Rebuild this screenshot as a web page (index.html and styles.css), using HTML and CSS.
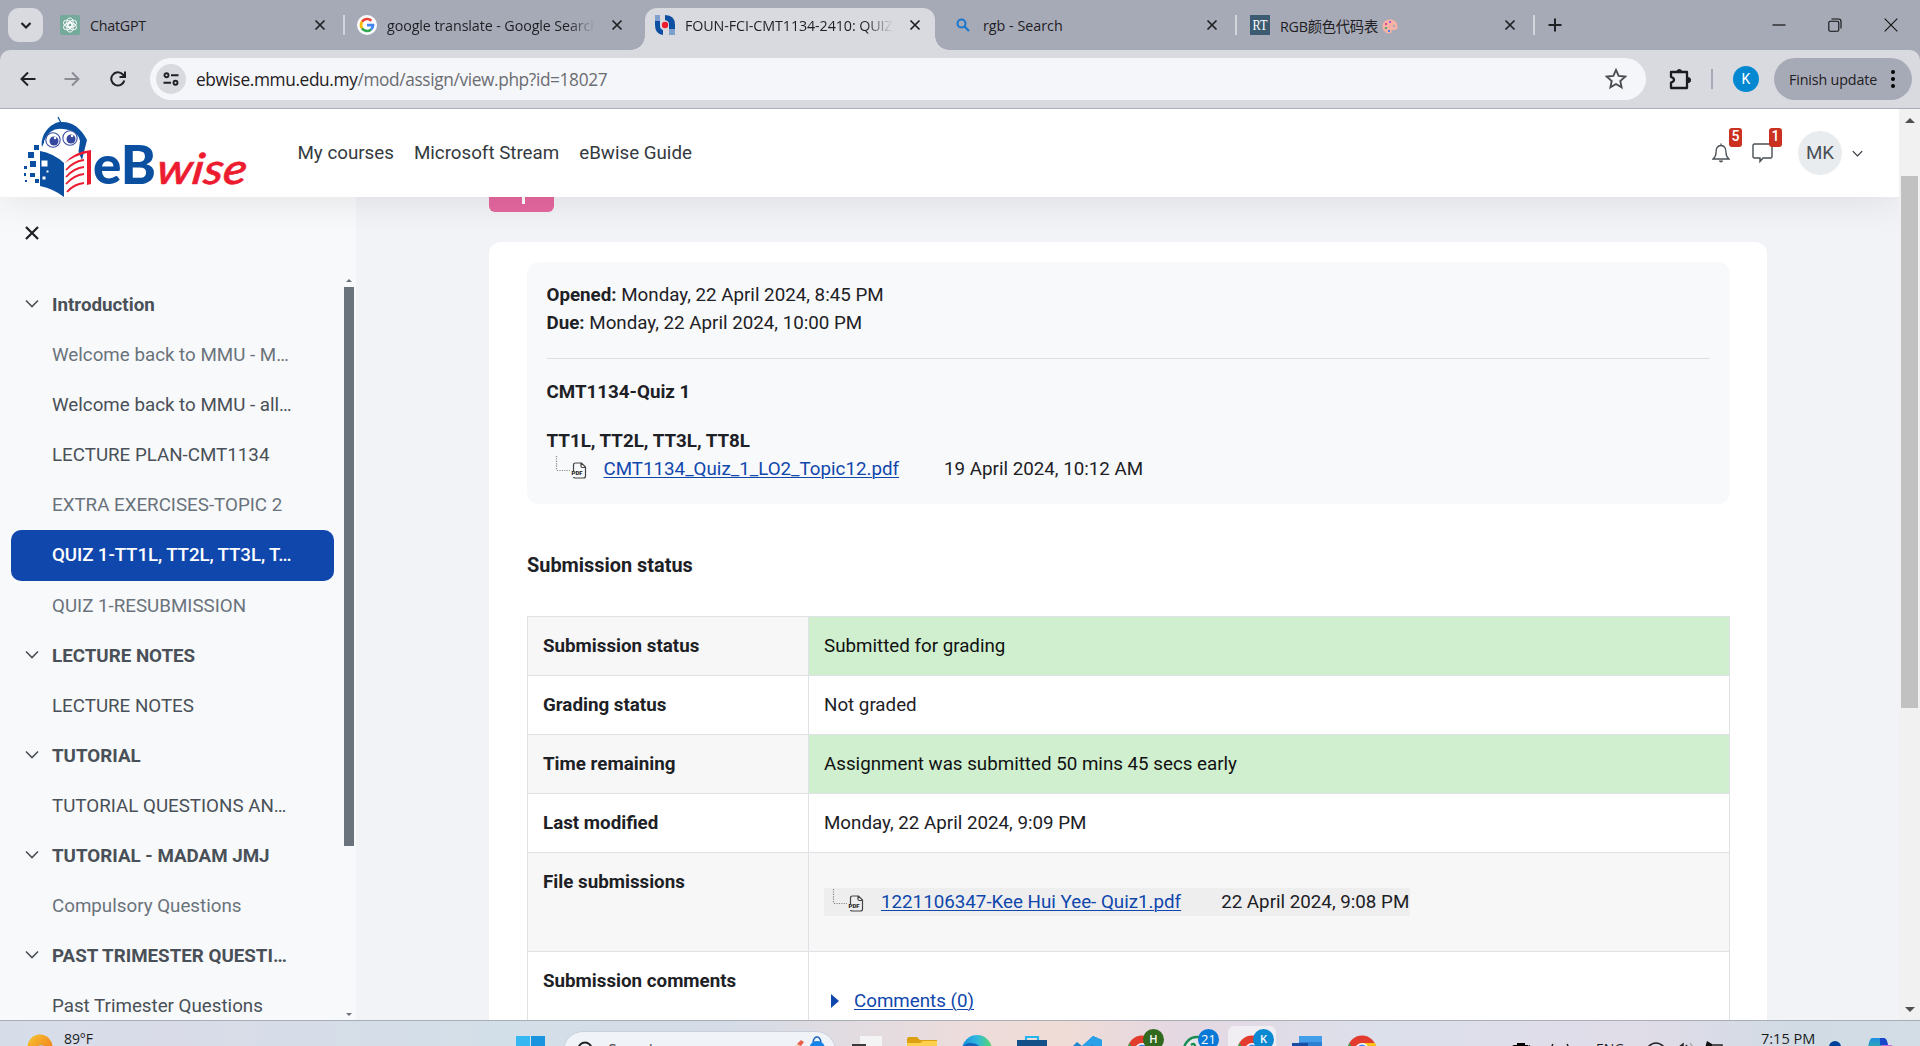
FILE: index.html
```html
<!DOCTYPE html>
<html lang="en">
<head>
<meta charset="utf-8">
<title>FOUN-FCI-CMT1134-2410: QUIZ 1</title>
<link rel="stylesheet" href="styles.css">
</head>
<body>
<svg width="0" height="0" class="defs">
  <symbol id="x" viewBox="0 0 12 12"><path d="M1.5 1.5l9 9M10.5 1.5l-9 9" fill="none" stroke="currentColor" stroke-width="1.7"/></symbol>
  <symbol id="chev" viewBox="0 0 14 8"><path d="M1 1l6 6 6-6" fill="none" stroke="currentColor" stroke-width="1.6"/></symbol>
  <symbol id="pdf" viewBox="0 0 32 26">
    <path d="M1.5 0v14.5M2 14.5h13" fill="none" stroke="#8a8a8a" stroke-width="1.2" stroke-dasharray="1.2 1.2"/>
    <path d="M18.500 15V9q0-2 2-2h6l4 4v9q0 2-2 2h-8q-2 0-2-1M26 7v3q0 1.500 1.500 1.500h3" fill="none" stroke="#444" stroke-width="1.200"/>
    <text x="16.500" y="19" font-size="6" font-weight="900" fill="#222" font-family="Roboto">PDF</text>
  </symbol>
  <symbol id="chrome" viewBox="0 0 30 30">
    <circle cx="15" cy="15" r="14.500" fill="#e33b2e"/><path d="M15 8h13a14.500 14.500 0 0 1-13 21.500l6-11z" fill="#fbc116"/><path d="M2.500 8l6.500 10 6 3.500-3 8A14.500 14.500 0 0 1 2.500 8z" fill="#2da94f"/>
    <circle cx="15" cy="15" r="7" fill="#fff"/><circle cx="15" cy="15" r="5.500" fill="#4285f4"/>
  </symbol>
</svg>

<div class="tabstrip">
  <div class="tab-search"><svg width="12" height="9" viewBox="0 0 12 9"><path d="M1.500 2L6 6.500 10.500 2" fill="none" stroke="#1f2023" stroke-width="2.200"/></svg></div>
  <div class="tab t1">
    <svg class="fav" viewBox="0 0 20 20"><rect width="20" height="20" rx="2" fill="#74aa9c"/><g fill="none" stroke="#fff" stroke-width="1"><ellipse cx="10" cy="7.500" rx="3.200" ry="4.500"/><ellipse cx="10" cy="7.500" rx="3.200" ry="4.500" transform="rotate(60 10 10)"/><ellipse cx="10" cy="7.500" rx="3.200" ry="4.500" transform="rotate(120 10 10)"/><ellipse cx="10" cy="7.500" rx="3.200" ry="4.500" transform="rotate(180 10 10)"/><ellipse cx="10" cy="7.500" rx="3.200" ry="4.500" transform="rotate(240 10 10)"/><ellipse cx="10" cy="7.500" rx="3.200" ry="4.500" transform="rotate(300 10 10)"/></g></svg>
    <span class="tt">ChatGPT</span><svg class="cls"><use href="#x"/></svg>
  </div>
  <i class="sep"></i>
  <div class="tab t2">
    <svg class="fav" viewBox="0 0 20 20"><circle cx="10" cy="10" r="10" fill="#fff"/><g fill="none" stroke-width="2.700"><path d="M5 6.700A6 6 0 0 1 14.300 5.800" stroke="#ea4335"/><path d="M5 13.300a6 6 0 0 1 0-6.600" stroke="#fbbc05"/><path d="M14 14.500a6 6 0 0 1-9-1.200" stroke="#34a853"/><path d="M10 10.200h6q0 2.800-2 4.300" stroke="#4285f4"/></g></svg>
    <span class="tt fade">google translate - Google Search</span><svg class="cls"><use href="#x"/></svg>
  </div>
  <div class="tab t3">
    <svg class="fav" viewBox="0 0 20 20"><path d="M0 0h5v6H0zM14 14h6v6h-6z" fill="#7fa0cd"/><path d="M0 6h5v5q0 3 3 4v5Q0 19 0 10zM10 0q10 0 10 10v4h-6V9q0-3-4-4z" fill="#0b4ea2"/><circle cx="10" cy="10" r="3.200" fill="#ee1c2e"/></svg>
    <span class="tt fade">FOUN-FCI-CMT1134-2410: QUIZ 1</span><svg class="cls"><use href="#x"/></svg>
  </div>
  <div class="tab t4">
    <svg class="fav" viewBox="0 0 20 20"><circle cx="8.500" cy="8.500" r="4" fill="none" stroke="#1777cf" stroke-width="2"/><path d="M11.500 11.500l4.500 4.500" stroke="#1777cf" stroke-width="2.200"/></svg>
    <span class="tt wide">rgb - Search</span><svg class="cls"><use href="#x"/></svg>
  </div>
  <i class="sep"></i>
  <div class="tab t5">
    <svg class="fav" viewBox="0 0 20 20"><rect width="20" height="20" fill="#3c5a70"/><text x="2.500" y="14.500" font-size="14" fill="#fff" font-family="Liberation Serif" textLength="15" lengthAdjust="spacingAndGlyphs">RT</text></svg>
    <span class="tt">RGB颜色代码表<svg class="palette" width="16" height="15" viewBox="0 0 16 15"><path d="M8 .5C3 .5.500 4 .500 7.500S3 14.500 8 14.500c2 0 1-3 2.500-3.500s5 1 5-3.500S12 .500 8 .500z" fill="#f9b3a6"/><circle cx="4" cy="5" r="1.100" fill="#e0308b"/><circle cx="8" cy="3" r="1.100" fill="#8a4ad8"/><circle cx="4" cy="9" r="1.100" fill="#25a55f"/><circle cx="7" cy="12" r="1.100" fill="#3568ef"/><circle cx="12" cy="7" r="1.200" fill="#a9adba"/></svg></span><svg class="cls"><use href="#x"/></svg>
  </div>
  <i class="sep"></i>
  <svg class="plus" viewBox="0 0 14 14"><path d="M7 .5v13M.5 7h13" stroke="#1f2023" stroke-width="2"/></svg>
  <div class="winbtns">
    <svg width="14" height="14" viewBox="0 0 14 14"><path d="M.5 7h13" stroke="#111" stroke-width="1.200"/></svg>
    <svg width="14" height="14" viewBox="0 0 14 14"><g fill="none" stroke="#111" stroke-width="1.100"><rect x=".8" y="3.200" width="10" height="10" rx="1.500"/><path d="M3.500 1h7Q13 1 13 3.500v7"/></g></svg>
    <svg width="14" height="14" viewBox="0 0 14 14"><path d="M.7.700l12.600 12.600M13.300.700L.700 13.300" stroke="#111" stroke-width="1.100"/></svg>
  </div>
</div>

<div class="toolbar">
  <svg class="nav-ic" viewBox="0 0 16 16"><path d="M15.500 8H2M8 1.500L1.500 8 8 14.500" fill="none" stroke="#1f2023" stroke-width="2"/></svg>
  <svg class="nav-ic fwd" viewBox="0 0 16 16"><path d="M.5 8H14M8 1.500L14.500 8 8 14.500" fill="none" stroke="#8a8c93" stroke-width="2"/></svg>
  <svg class="nav-ic rel" viewBox="0 0 16 16"><path d="M14.300 9.500A6.600 6.600 0 1 1 12.800 3.500L14.500 5.500M15 .5v5.600H9.500" fill="none" stroke="#1f2023" stroke-width="2"/></svg>
  <div class="omni">
    <div class="site"><svg width="16" height="14" viewBox="0 0 16 14"><g fill="none" stroke="#1f2023" stroke-width="1.900"><circle cx="3.500" cy="3.200" r="2"/><path d="M8 3.200h7.500M.5 10.800H8"/><circle cx="12.500" cy="10.800" r="2"/></g></svg></div>
    <span class="url">ebwise.mmu.edu.my<span>/mod/assign/view.php?id=18027</span></span>
    <svg class="star" viewBox="0 0 20 20"><path d="M10 1.800l2.400 5.400 5.900.600-4.400 4 1.200 5.800-5.100-3-5.100 3 1.200-5.800-4.400-4 5.900-.6z" fill="none" stroke="#4a4c52" stroke-width="1.700"/></svg>
  </div>
  <svg class="puz" viewBox="0 0 22 22"><path d="M2 4h6.500M12.500 4H18v16H2v-5.500q3-1 3-2.800T2 8.800V4z" fill="none" stroke="#1b1c20" stroke-width="2.300" stroke-linejoin="round"/><path d="M7.500 4a2.800 3 0 0 1 5.500 0zM19 9.500a2.600 2.600 0 0 1 0 5.200z" fill="#1b1c20" stroke="#1b1c20"/></svg>
  <i class="tsep"></i>
  <div class="avatar">K</div>
  <div class="finish"><span>Finish update</span><svg width="4" height="18" viewBox="0 0 4 18"><circle cx="2" cy="2" r="2"/><circle cx="2" cy="9" r="2"/><circle cx="2" cy="16" r="2"/></svg></div>
</div>

<div class="viewport">
  <div class="site-page">
    <header class="top">
      <svg class="logo" viewBox="0 -1 230 84" width="230" height="84">
        <path d="M38 2l4 8" stroke="#0b4ea2" stroke-width="1.200"/>
        <path d="M22 32C20 20 30 8 40 7c12-1 21 6 27 18l-5 20-4-9C58 24 55 17 44 15q-7-3-9 3-9 3-13 14z" fill="#0a4fa0"/>
        <path d="M24 26Q30 12 43 14 58 15 60 26l-2 14-14 2-20-7z" fill="#fff"/>
        <g fill="#fff" stroke="#3b4fa0" stroke-width="1.100"><circle cx="33" cy="25" r="7.200"/><circle cx="50" cy="23" r="7.200"/></g>
        <circle cx="34" cy="26" r="4.500" fill="#36479e"/><circle cx="51" cy="24" r="4.500" fill="#36479e"/><circle cx="35" cy="23" r="1.200" fill="#fff"/><circle cx="52" cy="21" r="1.200" fill="#fff"/>
        <path d="M20 36q13 2 24 12v34q-10-8-24-11z" fill="#0a4fa0"/>
        <path d="M14 30h5v5h-5zM8 37h6v6H8zM10 46h6v6h-6zM4 51h3v3H4zM10 58h5v4h-5zM5 65h2v2H5zM4 58h2v3H4zM15 64h4v4h-4z" fill="#0a4fa0"/>
        <path d="M21 45h7v7h-7zM26 55h3v3h-3zM22 61h4v4h-4z" fill="#fff" stroke="#0a4fa0"/>
        <path d="M45 48Q53 37 71 35v34l-4 1V38Q54 41 45 48z" fill="#ed1b2f"/>
        <path d="M46 55q8-9 18-10M46 62q8-9 18-10M46 69q8-9 18-10M47 77q7-8 17-9" fill="none" stroke="#ed1b2f" stroke-width="1.800"/>
        <text x="73" y="69" font-family="Lato" font-weight="900" font-size="53" fill="#0a4fa0" textLength="63" lengthAdjust="spacingAndGlyphs">eB</text>
        <text x="145" y="69" transform="skewX(-8)" font-family="Lato" font-style="italic" font-weight="500" font-size="43" fill="#ed1b2f" stroke="#ed1b2f" stroke-width=".6" textLength="90" lengthAdjust="spacingAndGlyphs">wise</text>
      </svg>
      <nav><a>My courses</a><a>Microsoft Stream</a><a>eBwise Guide</a></nav>
      <div class="user">
        <div class="ic"><svg width="18" height="20" viewBox="0 0 18 20"><path d="M1 16h16q-3-2.500-3-6.500C14 5 12.500 2.500 9 2.500S4 5 4 9.500q0 4-3 6.500zM9 .5v2" fill="none" stroke="#495057" stroke-width="1.300"/><path d="M6.800 17.500h4.400q-.5 2-2.200 2t-2.200-2z" fill="#495057"/></svg><b>5</b></div>
        <div class="ic"><svg width="21" height="20" viewBox="0 0 21 20"><path d="M2.500 1h16q1.500 0 1.500 1.500v11q0 1.500-1.500 1.500H11l-3 3.500V15H2.500Q1 15 1 13.500v-11Q1 1 2.500 1z" fill="none" stroke="#495057" stroke-width="1.400"/></svg><b>1</b></div>
        <div class="mk">MK</div>
        <svg class="dd" width="11" height="7"><use href="#chev"/></svg>
      </div>
    </header>
    <div class="body">
      <aside>
        <svg class="close" width="16" height="16"><use href="#x"/></svg>
        <ul>
          <li class="h"><svg><use href="#chev"/></svg>Introduction</li>
          <li class="m">Welcome back to MMU - M…</li>
          <li>Welcome back to MMU - all…</li>
          <li>LECTURE PLAN-CMT1134</li>
          <li class="m">EXTRA EXERCISES-TOPIC 2</li>
          <li class="on">QUIZ 1-TT1L, TT2L, TT3L, T…</li>
          <li class="m">QUIZ 1-RESUBMISSION</li>
          <li class="h"><svg><use href="#chev"/></svg>LECTURE NOTES</li>
          <li>LECTURE NOTES</li>
          <li class="h"><svg><use href="#chev"/></svg>TUTORIAL</li>
          <li>TUTORIAL QUESTIONS AN…</li>
          <li class="h"><svg><use href="#chev"/></svg>TUTORIAL - MADAM JMJ</li>
          <li class="m">Compulsory Questions</li>
          <li class="h"><svg><use href="#chev"/></svg>PAST TRIMESTER QUESTI…</li>
          <li>Past Trimester Questions</li>
        </ul>
        <div class="sbar"><i class="up"></i><i class="thumb"></i><i class="down"></i></div>
      </aside>
      <main>
        <div class="pink"><i></i></div>
        <section class="card">
          <div class="info">
            <p><b>Opened:</b> Monday, 22 April 2024, 8:45 PM</p>
            <p><b>Due:</b> Monday, 22 April 2024, 10:00 PM</p>
            <hr>
            <p class="q"><b>CMT1134-Quiz 1</b></p>
            <p><b>TT1L, TT2L, TT3L, TT8L</b></p>
            <div class="file"><svg width="32" height="26"><use href="#pdf"/></svg><a>CMT1134_Quiz_1_LO2_Topic12.pdf</a><span class="d1">19 April 2024, 10:12 AM</span></div>
          </div>
          <h3>Submission status</h3>
          <table>
            <tr><th>Submission status</th><td class="g">Submitted for grading</td></tr>
            <tr><th>Grading status</th><td>Not graded</td></tr>
            <tr><th>Time remaining</th><td class="g">Assignment was submitted 50 mins 45 secs early</td></tr>
            <tr><th>Last modified</th><td>Monday, 22 April 2024, 9:09 PM</td></tr>
            <tr class="tall"><th>File submissions</th><td><div class="file sub"><svg width="32" height="26"><use href="#pdf"/></svg><a>1221106347-Kee Hui Yee- Quiz1.pdf</a><span class="d2">22 April 2024, 9:08 PM</span></div></td></tr>
            <tr class="tall"><th>Submission comments</th><td><div class="com"><i></i><a>Comments (0)</a></div></td></tr>
          </table>
        </section>
      </main>
    </div>
  </div>
  <div class="pagebar"><i class="up"></i><i class="thumb"></i><i class="down"></i></div>
</div>

<div class="taskbar">
  <div class="weather"><svg width="26" height="26" viewBox="0 0 26 26"><defs><linearGradient id="sun" x2="1" y2="1"><stop stop-color="#f6c52e"/><stop offset="1" stop-color="#f0701c"/></linearGradient></defs><circle cx="13" cy="13" r="12.500" fill="url(#sun)"/><circle cx="14" cy="16" r="5" fill="#b6bdd2"/></svg><span>89°F</span></div>
  <svg class="start" width="30" height="30" viewBox="0 0 30 30"><path d="M0 1h14v14H0z" fill="#35b8f2"/><path d="M15 1h14v14H15z" fill="#1b94e0"/></svg>
  <div class="search"><svg width="18" height="18" viewBox="0 0 18 18"><circle cx="9" cy="8" r="6.500" fill="none" stroke="#222" stroke-width="2"/></svg><span>Search</span>
    <svg width="44" height="24" viewBox="0 0 44 24"><path d="M2 16L16 7l3 3-10 10z" fill="#eed9c4"/><path d="M14 8l4-4 3 2-3 4z" fill="#e8604c"/><path d="M26 16q0-11 8-11t9 11v8H26z" fill="#1684e8"/><path d="M30 6q1-5 4-5t4 5" fill="none" stroke="#1664c0" stroke-width="1.500"/></svg></div>
  <div class="apps">
    <svg viewBox="0 0 30 30"><path d="M8 1h22v20H8z" fill="#f4f4f5"/><path d="M0 9h14v12H0z" fill="#3b3b3b"/></svg>
    <svg viewBox="0 0 30 30"><path d="M0 4q0-2 2-2h8l3 3h17v6H0z" fill="#dda013"/><path d="M0 8h13l3-2h14v20H0z" fill="#fdd04e"/></svg>
    <svg viewBox="0 0 30 30"><defs><linearGradient id="ed"><stop stop-color="#1c8fdc"/><stop offset=".5" stop-color="#31b8df"/><stop offset="1" stop-color="#5bd768"/></linearGradient></defs><circle cx="15" cy="15" r="15" fill="url(#ed)"/><path d="M0 15q1-7 8-7 9 0 12 7z" fill="#1466b8"/></svg>
    <svg viewBox="0 0 30 30"><path d="M9 6V2h12v4" fill="none" stroke="#28b4ee" stroke-width="2.200"/><path d="M0 5h30v24H0z" fill="#144f87"/></svg>
    <svg viewBox="0 0 30 30"><path d="M21 1l9 4v24L1 11l4-4 5 4z" fill="#1e86cf"/><path d="M21 1l9 4v10h-9V9l-9 8-4-4z" fill="#2aa0e8"/></svg>
    <div class="badged"><svg viewBox="0 0 30 30"><use href="#chrome"/></svg><b class="h">H</b></div>
    <div class="badged"><svg viewBox="0 0 30 30"><circle cx="15" cy="15" r="13" fill="#e8e5ea" stroke="#1a8d51" stroke-width="2.500"/><path d="M9 10q4-3 4 2l-2 3" fill="none" stroke="#1a8d51" stroke-width="2.500"/></svg><b>21</b></div>
    <div class="badged act"><svg viewBox="0 0 30 30"><use href="#chrome"/></svg><b class="k">K</b></div>
    <svg viewBox="0 0 30 30"><path d="M7 1h23v28H7z" fill="#439de8"/><path d="M7 7h23v10H7z" fill="#2d7fd4"/><path d="M0 8h16v14H0z" fill="#174fa5"/></svg>
    <svg viewBox="0 0 30 30"><use href="#chrome"/></svg>
  </div>
  <div class="tray">
    <svg class="cam" width="60" height="8" viewBox="0 0 60 8"><path d="M0 3l2-1h3V0h8v2h3v1l2-1v6H0z" fill="#000"/><path d="M39 5l2-4M57 5l-2-4" stroke="#222" stroke-width="1.500"/></svg>
    <span class="eng">ENG</span>
    <svg class="wifi" width="80" height="24" viewBox="0 0 80 24"><g fill="none" stroke="#222" stroke-width="1.500"><path d="M1 8q9-10 18 0"/><path d="M32 8l5-4v8M40 5q2 2 2 5"/><path d="M44 3q3 3 3 7" stroke="#aaa"/><path d="M66 5h10v6"/></g><path d="M61 1l-2 7h7V4z" fill="#111"/></svg>
    <span class="time">7:15 PM</span>
    <i class="dot"></i>
    <svg class="cop" width="28" height="26" viewBox="0 0 28 26"><defs><linearGradient id="cp" x2="0" y2="1"><stop stop-color="#1c8ee6"/><stop offset="1" stop-color="#4bc46e"/></linearGradient></defs><path d="M5 1h13l-6 20H0Q1 2 5 1z" fill="url(#cp)"/><path d="M13 1h4q3 0 4 7h-8z" fill="#1748c9"/><path d="M15 8h9q4 1 2 8H12z" fill="#c06be0"/></svg>
  </div>
</div>
</body>
</html>
```
FILE: styles.css
```css
*{box-sizing:border-box}
body{margin:0;width:1920px;height:1046px;overflow:hidden;display:flex;flex-direction:column;font-family:Roboto,sans-serif;background:#a6aab7}
svg{display:block;flex:none}
.defs{position:absolute}
i{display:block;flex:none}

.tabstrip{height:50px;flex:none;display:flex;align-items:center;font:15px "Open Sans","Noto Sans CJK SC",sans-serif;color:#1f2023;position:relative}
.tab-search{width:35px;height:34px;margin-left:8px;border-radius:11px;background:#d9dae0;display:grid;place-items:center}
.tab{display:flex;align-items:center;height:42px;margin-top:8px;padding-bottom:8px}
.fav{width:20px;height:20px;margin-right:10px}
.tt{flex:1;white-space:nowrap;overflow:hidden;font-size:14.3px;letter-spacing:-.25px}
.wide{letter-spacing:0}
.fade{letter-spacing:-.1px;-webkit-mask-image:linear-gradient(90deg,#000 86%,transparent 99%)}
.cls{width:12px;height:12px;margin-left:14px}
.t1{width:266px;margin-left:17px;margin-right:17px}
.t2{width:278px;padding-left:12px;}
.t3{width:290px;margin-left:22px;padding-left:10px;padding-right:14px;background:#d9dae0;border-radius:12px 12px 0 0;position:relative}
.t3::before,.t3::after{content:"";position:absolute;bottom:0;width:14px;height:14px}
.t3::before{left:-14px;background:radial-gradient(circle at 0 0,transparent 13.5px,#d9dae0 14px)}
.t3::after{right:-14px;background:radial-gradient(circle at 100% 0,transparent 13.5px,#d9dae0 14px)}
.t4{width:283px;padding-left:18px;margin-right:17px}
.t5{width:279px;padding-left:13px;margin-right:17px}
.sep{width:2px;height:20px;background:#d4d5dc}
.palette{display:inline-block;margin-left:4px;vertical-align:-2px}
.plus{width:14px;height:14px;margin-left:13px}
.winbtns{margin-left:auto;display:flex;gap:42px;padding-right:22px}

.toolbar{height:59px;flex:none;background:#d9dae0;border-bottom:1px solid #abacb5;display:flex;align-items:center;border-radius:10px 10px 0 0;padding-left:20px}
.nav-ic{width:16px;height:16px;margin-right:28px}
.rel{margin-right:24px;margin-left:2px}
.omni{width:1496px;height:42px;border-radius:21px;background:#f5f6f9;display:flex;align-items:center;padding-left:6px}
.site{width:30px;height:30px;border-radius:50%;background:#d9dae0;display:grid;place-items:center}
.url{font:17.3px "Open Sans",sans-serif;margin-left:10px;color:#1f2023;letter-spacing:-.37px;flex:1}
.url span{color:#6a6c72}
.star{width:22px;height:22px;margin-right:19px}
.puz{width:22px;height:22px;margin-left:23px}
.tsep{width:2px;height:20px;background:#a6aab7;margin-left:20px}
.avatar{width:26px;height:26px;border-radius:50%;background:#0288d1;color:#fff;font-size:14px;display:grid;place-items:center;margin-left:20px}
.finish{width:138px;height:42px;border-radius:21px;background:#a6aab7;margin-left:15px;display:flex;align-items:center;justify-content:space-between;padding:0 17px 0 15px;font:14.3px "Open Sans",sans-serif;letter-spacing:-.15px;color:#1f2023;white-space:nowrap}

.viewport{flex:1;min-height:0;display:flex}
.site-page{width:1899px;display:flex;flex-direction:column;overflow:hidden;font-size:18.75px;color:#1d2125}
.top{height:88px;flex:none;background:#fff;display:flex;align-items:center;position:relative;z-index:2;box-shadow:0 4px 40px rgba(0,0,0,.09);padding-left:20px}
.logo{align-self:flex-end;margin-bottom:-1px}
nav{display:flex;gap:20px;margin-left:47.5px;color:#343a40}
.user{margin-left:auto;display:flex;align-items:center;padding-right:36px}
.ic{position:relative;width:40px;display:flex}
.ic b{position:absolute;left:17px;top:-15px;width:13px;height:19px;background:#ca3120;border-radius:3px;color:#fff;font-size:14px;line-height:17px;text-align:center;font-weight:500}
.mk{width:44px;height:44px;border-radius:50%;background:#e9ecef;color:#495057;display:grid;place-items:center;margin-left:6px}
.dd{margin-left:10px;color:#343a40}
.body{flex:1;min-height:0;display:flex;background:#f1f3f7}
aside{width:356px;background:#f8f9fb;position:relative;padding-top:28px;overflow:hidden;color:#495057}
.close{margin-left:24px;color:#1d2125}
ul{list-style:none;margin:39px 0 0 11px;padding:0;width:323px}
li{height:50px;line-height:51px;padding-left:41px;position:relative;white-space:nowrap}
li svg{position:absolute;left:14px;top:19px;width:14px;height:9px}
li.h{font-weight:700}
li.m{color:#6a737b}
li.on{background:#0f47ad;color:#fff;border-radius:10px;height:51px;font-weight:500;letter-spacing:-.12px}
.sbar{position:absolute;left:344px;top:82px;width:10px;bottom:4px;display:flex;flex-direction:column;align-items:center}
.up,.down{width:0;border:3px solid transparent}
.sbar .up{border-top:0;border-bottom-color:#6a737b}
.sbar .down{border-bottom:0;border-top-color:#6a737b;margin-top:auto}
.sbar .thumb{width:10px;height:559px;background:#6a737b;margin-top:5px}
main{padding-left:133px;width:1411px;overflow:hidden}
.pink{width:65px;height:15px;background:#e5679f;border-radius:0 0 6px 6px}
.pink i{width:3px;height:7px;background:#fff;margin-left:33px}
.card{background:#fff;border-radius:12px 12px 0 0;margin-top:30px;padding:20px 37px 0 38px;height:900px}
.info{background:#f8f9fb;border-radius:12px;height:242px;padding:19px 20px 19px 19.5px}
p{margin:0;line-height:28px}
b,th,h3{font-weight:700}
hr{border:0;border-top:1px solid #dee2e6;margin:21px 0 19px}
.q{margin-bottom:21px}
.file{display:flex;align-items:center;height:28px;white-space:nowrap}
.file svg{margin:0 17px 0 8px}
.file a,.com a{color:#0f47ad;text-decoration:underline;text-decoration-thickness:1px;text-underline-offset:2px}
.d1{margin-left:45px}
.d2{margin-left:40px}
h3{font-size:19.9px;margin:51px 0 39px;line-height:22px}
table{border-collapse:collapse;width:1203px;table-layout:fixed}
td,th{border:1px solid #dee2e6;height:59px;padding:15px;line-height:28px;text-align:left;vertical-align:top}
th{width:281px}
tr:nth-child(odd){background:#f7f7f7}
td.g{background:#cfefcf;color:#111}
.tall td,.tall th{height:99px}
.sub{background:#eee;width:586px;margin-top:20px}
.com{display:flex;align-items:center;margin-top:20px}
.com i{border:7px solid transparent;border-left:8px solid #0f47ad;border-right:0;margin:0 15px 0 7px}
.pagebar{width:21px;background:#f1f1f1;display:flex;flex-direction:column;align-items:center;padding:9px 0 8px}
.pagebar .up,.pagebar .down{border-width:5px}
.pagebar .up{border-top:0;border-bottom-color:#505050}
.pagebar .down{border-bottom:0;border-top-color:#505050;margin-top:auto}
.pagebar .thumb{width:17px;height:532px;background:#c1c1c1;margin-top:53px}

.taskbar{height:26px;flex:none;border-top:1px solid #a9adb5;overflow:hidden;display:flex;align-items:flex-start;background:linear-gradient(90deg,#d6dde9,#d9dce8 170px,#d3dfe8 500px,#d5dce7 720px,#ecdcdc 960px,#f0dcd6 1060px,#e4d8e2 1180px,#dce0eb 1380px,#e0dce8 1640px,#d1dbe4 1800px,#d3dde6);font-family:"Open Sans",sans-serif;color:#1b1b1b}
.weather{width:516px;display:flex;padding:13px 0 0 27px;font-size:14px;letter-spacing:-.1px}
.weather span{margin:-5px 0 0 11px;line-height:20px}
.start{margin-top:14px}
.search{width:273px;height:40px;margin:10px 0 0 17px;background:#f0f3f8;border:1px solid #c9d0dc;border-radius:20px;display:flex;padding-left:12px;font-size:16px}
.search svg:first-child{margin-top:9px}
.search span{margin:8px auto 0 14px;line-height:20px;color:#555}
.search svg:last-child{margin:4px 8px 0 0}
.apps{display:flex;gap:25px;margin:14px 0 0 16px}
.apps svg{width:30px;height:30px}
.badged{position:relative;width:30px}
.badged svg{position:relative}
.badged b{position:absolute;left:16px;top:-6px;width:21px;height:21px;border-radius:11px;background:#0a78d6;color:#fff;font-size:13px;line-height:20px;text-align:center;font-weight:400}
.badged .h{background:#31691e;font-size:11px;font-weight:600}
.badged .k{background:#0a88d2;font-size:11px;font-weight:600}
.act::before{content:"";position:absolute;left:-9px;top:-9px;width:48px;height:48px;background:#f0eef3;border-radius:6px}
.tray{display:flex;margin-left:135px}
.cam{margin-top:22px}
.eng{font-size:14px;line-height:20px;margin:18px 0 0 24px;width:50px}
.wifi{margin-top:19px}
.time{margin:8px 0 0 35px;font-size:14.500px;line-height:20px;width:55px;white-space:nowrap;letter-spacing:0}
.dot{width:12px;height:12px;border-radius:50%;background:#00419a;margin:20px 0 0 13px}
.cop{margin:16px 0 0 26px}
```
